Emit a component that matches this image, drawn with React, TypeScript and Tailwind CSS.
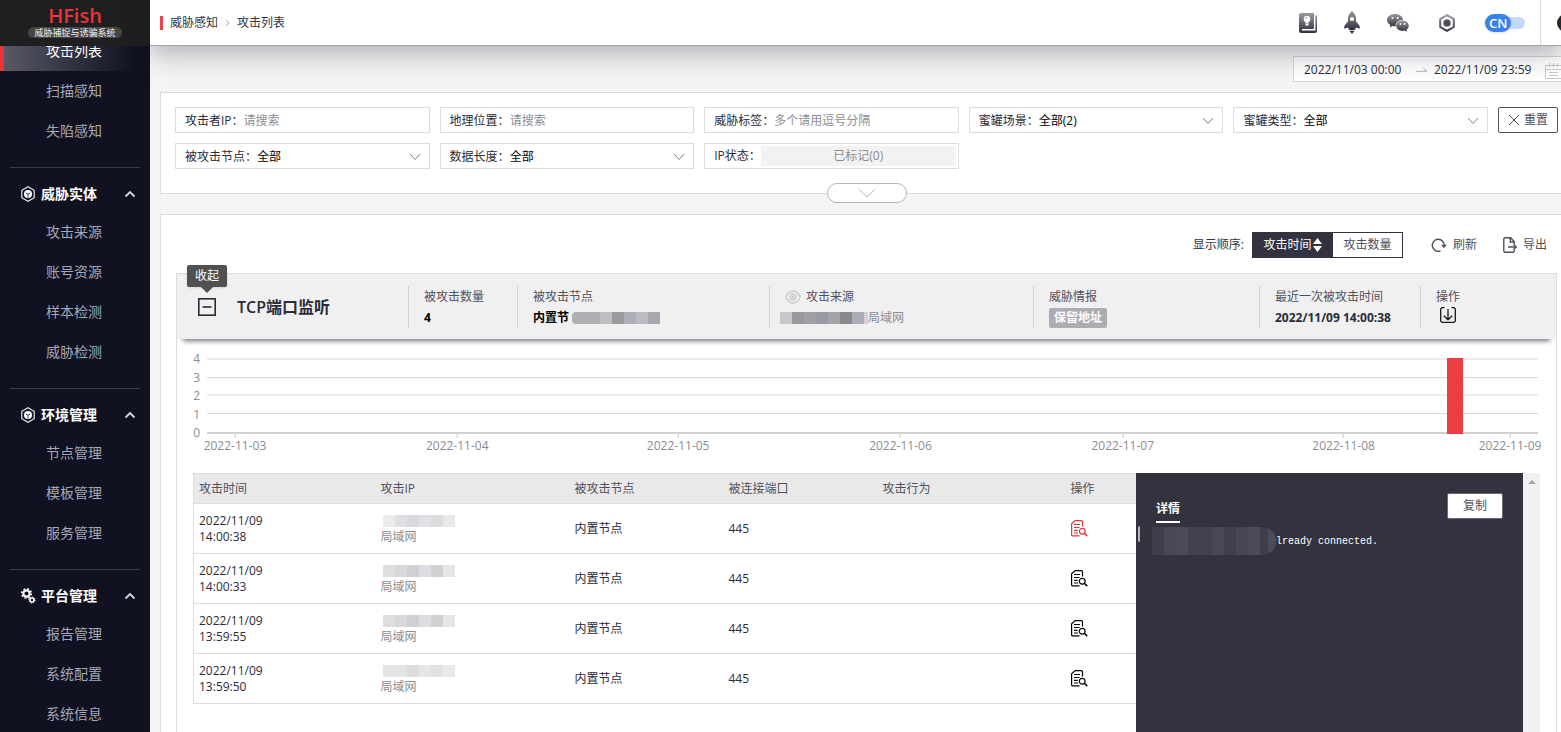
import React from "react";

type MenuGroup = { title: string; icon: "cube" | "gears"; items: string[] };

const menuGroups: MenuGroup[] = [
  { title: "威胁实体", icon: "cube", items: ["攻击来源", "账号资源", "样本检测", "威胁检测"] },
  { title: "环境管理", icon: "cube", items: ["节点管理", "模板管理", "服务管理"] },
  { title: "平台管理", icon: "gears", items: ["报告管理", "系统配置", "系统信息"] },
];

const ipMaskRows = [
  ["bg-[#ececeb]", "bg-[#dedfe3]", "bg-[#d8d9dc]", "bg-[#e0e1e5]", "bg-[#dcdcdc]", "bg-[#e8e9e9]"],
  ["bg-[#dededd]", "bg-[#d8d8da]", "bg-[#cfd0d5]", "bg-[#dcdde2]", "bg-[#d1d1d1]", "bg-[#e5e6e6]"],
  ["bg-[#dededd]", "bg-[#d8d8da]", "bg-[#cfd0d5]", "bg-[#dcdde2]", "bg-[#d1d1d1]", "bg-[#e5e6e6]"],
  ["bg-[#e3e3e3]", "bg-[#e3e3e5]", "bg-[#dcdcde]", "bg-[#e6e6e8]", "bg-[#e1e1e1]", "bg-[#e9e9ea]"],
];

const attacks = [
  { date: "2022/11/09", time: "14:00:38", node: "内置节点", port: "445", active: true },
  { date: "2022/11/09", time: "14:00:33", node: "内置节点", port: "445", active: false },
  { date: "2022/11/09", time: "13:59:55", node: "内置节点", port: "445", active: false },
  { date: "2022/11/09", time: "13:59:50", node: "内置节点", port: "445", active: false },
];

// day labels and where they fall along the axis, in percent
const axisDays = [
  { label: "2022-11-03", at: 2.1 },
  { label: "2022-11-04", at: 18.8 },
  { label: "2022-11-05", at: 35.4 },
  { label: "2022-11-06", at: 52.1 },
  { label: "2022-11-07", at: 68.8 },
  { label: "2022-11-08", at: 85.4 },
  { label: "2022-11-09", at: 97.9 },
];

const bars = [{ at: 93.2, width: 1.15, value: 4 }];
const axisMax = 4;

/* ---------- icons ---------- */

const CubeIcon = () => (
  <svg width="14" height="16" viewBox="0 0 14 16" fill="none" aria-hidden="true">
    <path d="M7 .8 13.2 4.3v7.4L7 15.2.8 11.7V4.3z" stroke="#e8e8ec" strokeWidth="1.2" />
    <circle cx="7" cy="8" r="4" fill="#fff" />
    <path d="M7 8.2V11.500M7 8.2 4.800 7M7 8.2 9.200 7" stroke="#111221" strokeWidth=".8" />
  </svg>
);

const GearsIcon = () => (
  <svg width="15" height="16" viewBox="0 0 15 16" fill="none" aria-hidden="true">
    <circle cx="5.5" cy="5.5" r="3.2" stroke="#fff" strokeWidth="2.2" />
    <circle cx="5.5" cy="5.5" r="4.8" stroke="#fff" strokeWidth="1.5" strokeDasharray="1.9 1.87" />
    <circle cx="11" cy="12" r="2" stroke="#fff" strokeWidth="1.6" />
    <circle cx="11" cy="12" r="3.1" stroke="#fff" strokeWidth="1" strokeDasharray="1.2 1.23" />
  </svg>
);

const ChevronUp = () => (
  <svg width="12" height="8" viewBox="0 0 12 8" fill="none" aria-hidden="true">
    <path d="M1.5 6.5 6 2l4.500 4.500" stroke="#d6d6dc" strokeWidth="1.8" />
  </svg>
);

const ChevronDown = () => (
  <svg width="12" height="8" viewBox="0 0 12 8" fill="none" className="pointer-events-none shrink-0" aria-hidden="true">
    <path d="M1 1l5 5.500L11 1" stroke="#7d7d86" />
  </svg>
);

const IconGradient = ({ id }: { id: string }) => (
  <defs>
    <linearGradient id={id} x1="0" y1="0" x2="0" y2="1">
      <stop offset="0" stopColor="#98989f" />
      <stop offset="1" stopColor="#30303f" />
    </linearGradient>
  </defs>
);

const BookIcon = () => (
  <svg width="18" height="20" viewBox="0 0 18 20" aria-hidden="true">
    <IconGradient id="gBook" />
    <rect width="18" height="20" rx="2" fill="url(#gBook)" />
    <path d="M3 16.700h12.700V2.500" fill="none" stroke="#fff" strokeWidth="1.500" />
    <path d="M15 0h3v2.500h-3z" fill="#fff" />
    <circle cx="8" cy="6" r="3.300" fill="#fff" />
    <path d="M6.500 8.500h3v4h-3z" fill="#fff" />
    <path d="M6.500 10.300h3" stroke="#77777f" strokeWidth=".6" />
    <path d="M6.300 6A1.700 1.700 0 0 1 8 4.300" stroke="#8a8a92" strokeWidth=".7" fill="none" />
  </svg>
);

const RocketIcon = () => (
  <svg width="16" height="23" viewBox="0 0 16 23" aria-hidden="true">
    <IconGradient id="gRocket" />
    <path
      fill="url(#gRocket)"
      fillRule="evenodd"
      d="M8 0c2.600 2 4 5 4 8v2.500l3 3.500c.8 1 .8 2 .8 3.800L12 16.500c-.3 1.200-.8 2-1.500 2.500h-5c-.7-.5-1.200-1.300-1.500-2.500L.2 17.800C.2 16 .2 15 1 14l3-3.500V8c0-3 1.400-6 4-8zm0 6a2.100 2.100 0 1 0 0 4.200A2.100 2.100 0 0 0 8 6z"
    />
    <path d="M5.500 19.800h5L8 23z" fill="#30303f" />
  </svg>
);

const WechatIcon = () => (
  <svg width="22" height="18" viewBox="0 0 22 18" aria-hidden="true">
    <IconGradient id="gChat" />
    <path
      fill="url(#gChat)"
      d="M8 0c4.400 0 8 2.600 8 6-4-.3-7.700 2.300-7.300 6.300-1.100.1-2.200 0-3.200-.3L2.700 13.600l.7-2.600C1.300 9.900 0 8.100 0 6c0-3.300 3.600-6 8-6z"
    />
    <path
      fill="url(#gChat)"
      d="M15.500 6.500c3.500 0 6.300 2.300 6.300 5.200 0 1.600-.9 3-2.300 4l.5 2.100-2.400-1.200c-.7.200-1.400.3-2.100.3-3.500 0-6.300-2.300-6.300-5.200s2.800-5.200 6.300-5.200z"
    />
    <g fill="#fff">
      <circle cx="5.500" cy="4" r="1" />
      <circle cx="10.600" cy="4" r="1" />
      <circle cx="13.400" cy="10" r=".9" />
      <circle cx="17.600" cy="10" r=".9" />
    </g>
  </svg>
);

const HexIcon = () => (
  <svg width="16" height="18" viewBox="0 0 16 18" fill="none" aria-hidden="true">
    <IconGradient id="gHex" />
    <path d="M8 1.200 14.800 5v8L8 16.800 1.200 13V5z" stroke="url(#gHex)" strokeWidth="2" strokeLinejoin="round" />
    <circle cx="8" cy="9" r="3.600" fill="#4d4d59" stroke="#7c7c85" strokeWidth=".6" />
  </svg>
);

const CalendarIcon = () => (
  <svg width="17" height="17" viewBox="0 0 17 17" fill="none" stroke="#c8c8cc" aria-hidden="true">
    <path d="M.5 3.500h16v13H.5zM.5 7.500h16M4.500 1v4M12.500 1v4M8.500 1v4M4 10.500h9M4 13.500h9" />
  </svg>
);

const MinusBox = () => (
  <svg width="18" height="18" viewBox="0 0 18 18" fill="none" stroke="#2b2b3a" aria-hidden="true">
    <rect x=".8" y=".8" width="16.400" height="16.400" strokeWidth="1.600" />
    <path d="M4.500 9h9" strokeWidth="1.600" />
  </svg>
);

const EyeIcon = () => (
  <svg width="16" height="14" viewBox="0 0 16 14" fill="none" stroke="#cbcbcd" strokeWidth="1.400" aria-hidden="true">
    <path d="M.8 7C2.500 3 5 1 8 1s5.500 2 7.200 6C13.500 11 11 13 8 13S2.500 11 .8 7z" />
    <circle cx="8" cy="7" r="3" />
    <circle cx="8" cy="7" r="1" fill="#cbcbcd" />
  </svg>
);

const DownloadBox = () => (
  <svg width="16" height="16" viewBox="0 0 16 16" fill="none" stroke="#16161c" strokeWidth="1.300" aria-hidden="true">
    <path d="M4.500 .7H2.500A1.800 1.800 0 0 0 .7 2.500v11a1.800 1.800 0 0 0 1.800 1.800h11a1.800 1.800 0 0 0 1.800-1.800v-11A1.800 1.800 0 0 0 13.500.7h-2" />
    <path d="M8 2v10.500M3.800 8.700 8 12.800l4.200-4.100" />
  </svg>
);

const RefreshIcon = () => (
  <svg width="16" height="15" viewBox="0 0 16 15" fill="none" aria-hidden="true">
    <path d="M9.500 12.800A6 6 0 1 1 13.200 8" stroke="#50505c" strokeWidth="1.400" />
    <path d="M10.200 6.800h5.600L13 10.200z" fill="#50505c" />
  </svg>
);

const ExportIcon = () => (
  <svg width="14" height="16" viewBox="0 0 14 16" fill="none" stroke="#50505c" strokeWidth="1.400" aria-hidden="true">
    <path d="M11.300 7V4.700L7.700.8H2A1.200 1.200 0 0 0 .8 2v12A1.200 1.200 0 0 0 2 15.200h8.100a1.200 1.200 0 0 0 1.200-1.200v-1" />
    <path d="M7.300.8v4.200h4M5 10h8M10.500 7.300 13.200 10l-2.700 2.700" />
  </svg>
);

const DocSearchIcon = () => (
  <svg width="17" height="17" viewBox="0 0 17 17" fill="none" stroke="currentColor" strokeWidth="1.200" aria-hidden="true">
    <path d="M11.500 6.500V1.800A1.200 1.200 0 0 0 10.300.6H4.200L.6 3.800v10.900a1.200 1.200 0 0 0 1.200 1.200H8.500" />
    <path d="M3 4.500h6M3 7.500h5.500M3 10.300h3.600M3 13h4" />
    <circle cx="11.200" cy="11.200" r="2.900" />
    <path d="m13.300 13.300 2.900 2.800" strokeWidth="1.500" />
  </svg>
);

/* ---------- sidebar ---------- */

const MenuItem = ({ label, active = false }: { label: string; active?: boolean }) => (
  <li>
    <a
      href="#"
      className={
        active
          ? "flex h-10 items-center border-l-4 border-[#eb3437] bg-linear-to-r from-[#5a5a66] to-[#111221] to-90% pl-[42px] text-white"
          : "flex h-10 items-center pl-[46px] text-[#a7a8b3]"
      }
    >
      {label}
    </a>
  </li>
);

const Sidebar = () => (
  <aside className="flex w-[150px] shrink-0 flex-col bg-[#111221] text-sm">
    <div className="z-10 flex h-[46px] shrink-0 flex-col items-center bg-[#1f1f1f] pt-[5px]">
      <span className="text-xl leading-[22px] font-semibold text-[#eb3437]">HFish</span>
      <span className="rounded-full bg-[#454545] px-[6px] text-[9px] leading-[11px] text-[#f0f0f0]">威胁捕捉与诱骗系统</span>
    </div>
    <nav className="min-h-0 flex-1 overflow-hidden">
      {/* the menu is scrolled a little, so its first entry is cut by the logo */}
      <ul className="-mt-[15px]">
        <MenuItem label="攻击列表" active />
        <MenuItem label="扫描感知" />
        <MenuItem label="失陷感知" />
      </ul>
      {menuGroups.map((group) => (
        <section key={group.title}>
          <hr className="mx-[10px] mt-4 border-[#3a3b48]" />
          <button type="button" className="mt-2 flex h-9 w-full items-center pr-[14px] pl-[21px] font-bold text-white">
            <span className="w-5">{group.icon === "cube" ? <CubeIcon /> : <GearsIcon />}</span>
            <span className="flex-1 text-left">{group.title}</span>
            <ChevronUp />
          </button>
          <ul>
            {group.items.map((item) => (
              <MenuItem key={item} label={item} />
            ))}
          </ul>
        </section>
      ))}
    </nav>
  </aside>
);

/* ---------- top bar ---------- */

const TopBar = () => (
  <header className="relative z-10 flex h-[46px] shrink-0 items-center border-b border-[#a3a3ab] bg-white pl-[10px] shadow-[0_6px_28px_rgba(20,20,45,0.34)]">
    <span className="mr-[7px] h-[14px] w-[3px] bg-[#eb4446]" />
    <nav className="flex items-center gap-[7px] text-[#333340]">
      <a href="#">威胁感知</a>
      <svg width="5" height="8" viewBox="0 0 5 8" fill="none" aria-hidden="true">
        <path d="M.8.8 4 4 .8 7.200" stroke="#a8a8ae" />
      </svg>
      <a href="#">攻击列表</a>
    </nav>
    <div className="ml-auto flex h-full items-center">
      <div className="flex items-center gap-[27px] pr-[30px]">
        <button type="button" aria-label="文档"><BookIcon /></button>
        <button type="button" aria-label="更新"><RocketIcon /></button>
        <button type="button" aria-label="微信"><WechatIcon /></button>
        <button type="button" aria-label="社区" className="ml-[3px]"><HexIcon /></button>
      </div>
      <button type="button" role="switch" aria-checked="true" className="mr-[15px] flex w-10 items-center">
        <span className="z-10 rounded-full bg-[#3a80ea] px-1 text-[13px] leading-[18px] font-semibold text-white shadow">CN</span>
        <span className="-ml-2 h-3 flex-1 rounded-r-full bg-[#c3d8fa]" />
      </button>
      <div className="flex h-full w-[21px] items-center overflow-hidden border-l border-[#dcdcdf] pl-4">
        <span className="size-[18px] shrink-0 rounded-full bg-[#26262e]" />
      </div>
    </div>
  </header>
);

/* ---------- filters ---------- */

const fieldBox = "flex h-[26px] items-center border border-[#dcdce0] pl-[9px] text-[#2b2b3a]";

const TextFilter = ({ id, label, placeholder }: { id: string; label: string; placeholder: string }) => (
  <div className={`${fieldBox} pt-[2px]`}>
    <label htmlFor={id} className="shrink-0">{label}：</label>
    <input id={id} placeholder={placeholder} className="min-w-0 flex-1 outline-none placeholder:text-[#8c8c94]" />
  </div>
);

const SelectFilter = ({ id, label, value }: { id: string; label: string; value: string }) => (
  <div className={`${fieldBox} pt-[2px] pr-2`}>
    <label htmlFor={id} className="shrink-0">{label}：</label>
    <select id={id} className="min-w-0 flex-1 appearance-none text-black outline-none">
      <option>{value}</option>
    </select>
    <ChevronDown />
  </div>
);

const Filters = () => (
  <section className="relative mt-[10px] flex items-start gap-[10px] border border-[#dcdce0] bg-white px-[14px] pt-[14px] pb-6">
    <div className="grid flex-1 grid-cols-5 gap-[10px]">
      <TextFilter id="ip" label="攻击者IP" placeholder="请搜索" />
      <TextFilter id="geo" label="地理位置" placeholder="请搜索" />
      <TextFilter id="tag" label="威胁标签" placeholder="多个请用逗号分隔" />
      <SelectFilter id="scene" label="蜜罐场景" value="全部(2)" />
      <SelectFilter id="type" label="蜜罐类型" value="全部" />
      <SelectFilter id="node" label="被攻击节点" value="全部" />
      <SelectFilter id="length" label="数据长度" value="全部" />
      <div className={`${fieldBox} pr-[2px]`}>
        <span className="shrink-0">IP状态：</span>
        <button type="button" className="h-5 flex-1 rounded-[2px] bg-[#f2f2f2] text-[#8c8c94]">已标记(0)</button>
      </div>
    </div>
    <button type="button" className="flex h-[26px] w-[60px] items-center justify-center gap-1 rounded-[2px] border border-[#50505e] text-[#50505e]">
      <svg width="12" height="12" viewBox="0 0 12 12" stroke="#50505e" aria-hidden="true">
        <path d="m1 1 10 10M11 1 1 11" />
      </svg>
      重置
    </button>
    <button
      type="button"
      aria-label="展开"
      className="absolute -bottom-[10px] left-1/2 flex h-5 w-20 -translate-x-1/2 items-center justify-center rounded-full border border-[#b4b4b9] bg-white"
    >
      <svg width="18" height="9" viewBox="0 0 18 9" fill="none" stroke="#b4b4b9" aria-hidden="true">
        <path d="m1 .5 8 7.500 8-7.500" />
      </svg>
    </button>
  </section>
);

/* ---------- attack list ---------- */

const ListToolbar = () => (
  <div className="flex items-center justify-end pr-[10px] text-[#50505c]">
    <span className="mr-2 text-[#333340]">显示顺序:</span>
    <div className="flex h-[26px] border border-[#333340]">
      <button type="button" className="flex w-20 items-center justify-center gap-[2px] bg-[#333340] text-white">
        攻击时间
        <svg width="9" height="14" viewBox="0 0 9 14" fill="#fff" aria-hidden="true">
          <path d="M4.500 0 9 6H0zM4.500 14 0 8h9z" />
        </svg>
      </button>
      <button type="button" className="w-[69px]">攻击数量</button>
    </div>
    <button type="button" className="ml-7 flex items-center gap-[6px]"><RefreshIcon />刷新</button>
    <button type="button" className="ml-[26px] flex items-center gap-[6px]"><ExportIcon />导出</button>
  </div>
);

const SummaryCell = ({ label, children }: { label: React.ReactNode; children: React.ReactNode }) => (
  <div className="flex h-[42px] min-w-0 flex-col justify-between border-l border-[#d2d2d5] pl-[15px]">
    <div className="flex items-center gap-[5px] leading-[22px] whitespace-nowrap text-[#50505c]">{label}</div>
    <div className="flex h-5 items-center whitespace-nowrap">{children}</div>
  </div>
);

const Summary = () => (
  <div className="relative">
    <div className="absolute inset-x-[6px] bottom-0 h-3 shadow-[0_2px_5px_rgba(20,20,40,0.6)]" />
    <div className="relative grid h-[65px] grid-cols-[231fr_109fr_252fr_264fr_226fr_161fr_136fr] items-center bg-[#f0f0f0]">
      <div className="relative flex items-center pl-[21px]">
        <button type="button" aria-label="收起"><MinusBox /></button>
        <span className="ml-[21px] text-base font-semibold text-[#2b2b3a]">TCP端口监听</span>
        <div role="tooltip" className="absolute bottom-[26px] left-[10px] flex flex-col items-center">
          <span className="rounded-[2px] bg-[#505050] px-2 leading-[22px] text-white shadow">收起</span>
          <svg width="12" height="6" viewBox="0 0 12 6" fill="#505050" aria-hidden="true">
            <path d="M0 0h12L6 6z" />
          </svg>
        </div>
      </div>
      <SummaryCell label="被攻击数量"><b className="text-black">4</b></SummaryCell>
      <SummaryCell label="被攻击节点">
        <b className="text-black">内置节</b>
        <span className="ml-[3px] flex h-3 overflow-hidden rounded-l">
          <i className="w-7 bg-[#b0b0b4]" />
          <i className="w-3 bg-[#bdbec2]" />
          <i className="w-3 bg-[#9c999c]" />
          <i className="w-3 bg-[#acb0bb]" />
          <i className="w-3 bg-[#bbbbc1]" />
          <i className="w-3 bg-[#a8a7af]" />
        </span>
      </SummaryCell>
      <SummaryCell label={<><EyeIcon />攻击来源</>}>
        <span className="-ml-[5px] flex h-3">
          <i className="w-3 bg-[#c8c8cc]" />
          <i className="w-3 bg-[#9a989b]" />
          <i className="w-3 bg-[#a09fa5]" />
          <i className="w-3 bg-[#989ba3]" />
          <i className="w-3 bg-[#a3a5a9]" />
          <i className="w-3 bg-[#8c898c]" />
          <i className="w-3 bg-[#abaeb6]" />
          <i className="w-1 bg-[#d3d3d5]" />
        </span>
        <span className="text-[#8c8c94]">局域网</span>
      </SummaryCell>
      <SummaryCell label="威胁情报">
        <span className="rounded-[2px] bg-[#acacb3] px-[5px] leading-5 font-semibold text-white">保留地址</span>
      </SummaryCell>
      <SummaryCell label="最近一次被攻击时间"><b className="text-[#2b2b3a]">2022/11/09 14:00:38</b></SummaryCell>
      <SummaryCell label="操作">
        <button type="button" aria-label="下载" className="ml-1 pb-[6px]"><DownloadBox /></button>
      </SummaryCell>
    </div>
  </div>
);

const TrendChart = () => (
  <div className="mt-[11px] flex items-start gap-[7px] pr-[18px] pl-4 text-[#8c8c90]">
    <div className="flex h-[91px] w-[7px] flex-col justify-between text-right leading-[17px]">
      {[4, 3, 2, 1, 0].map((n) => (
        <span key={n}>{n}</span>
      ))}
    </div>
    <div className="mt-2 flex-1">
      <div className="relative h-[76px]">
        <div className="grid h-full grid-rows-4 border-t-2 border-b-2 border-t-[#ebebeb] border-b-[#d0d0d2]">
          <span className="border-b border-[#d8d8da]" />
          <span className="border-b-2 border-[#ebebeb]" />
          <span className="border-b border-[#d8d8da]" />
          <span />
        </div>
        {bars.map((bar) => (
          <div
            key={bar.at}
            className="absolute bottom-0 bg-[#ec3e40]"
            style={{ left: `${bar.at}%`, width: `${bar.width}%`, height: `${(bar.value / axisMax) * 100}%` }}
          />
        ))}
      </div>
      <div className="relative h-[21px]">
        {axisDays.map((day) => (
          <div key={day.label} className="absolute top-0 flex -translate-x-1/2 flex-col items-center leading-4" style={{ left: `${day.at}%` }}>
            <i className="h-1 w-px bg-[#c8c8ca]" />
            <span className="whitespace-nowrap">{day.label}</span>
          </div>
        ))}
      </div>
    </div>
  </div>
);

const AttackTable = () => (
  <div className="min-w-0 flex-1">
    <table className="w-full table-fixed border-collapse border border-[#dcdce0] text-left leading-4">
      <thead className="bg-[#e9e9e9] text-[#50505c]">
        <tr className="h-[30px]">
          <th className="w-[182px] pl-[5px] font-normal">攻击时间</th>
          <th className="w-[194px] pl-[5px] font-normal">攻击IP</th>
          <th className="w-[154px] pl-[5px] font-normal">被攻击节点</th>
          <th className="w-[154px] pl-[5px] font-normal">被连接端口</th>
          <th className="w-[188px] pl-[5px] font-normal">攻击行为</th>
          <th className="w-[71px] pl-[5px] font-normal">操作</th>
        </tr>
      </thead>
      <tbody className="text-[#2b2b3a]">
        {attacks.map((attack, i) => (
          <tr key={attack.time} className="h-[50px] border-t border-[#dcdce0]">
            <td className="pl-[5px]">{attack.date}<br />{attack.time}</td>
            <td className="pl-[5px] text-[#8c8c94]">
              <span className="ml-[2px] flex h-4 py-[2px]">
                {ipMaskRows[i].map((tone, n) => (
                  <i key={n} className={`w-3 ${tone}`} />
                ))}
              </span>
              局域网
            </td>
            <td className="pl-[5px]">{attack.node}</td>
            <td className="pl-[5px]">{attack.port}</td>
            <td className="pl-[5px]" />
            <td className="pl-[5px]">
              <button type="button" aria-label="查看详情" className={attack.active ? "block text-[#eb3437]" : "block text-black"}>
                <DocSearchIcon />
              </button>
            </td>
          </tr>
        ))}
      </tbody>
    </table>
  </div>
);

const DetailPanel = () => (
  <div className="flex min-h-[300px] w-[404px] shrink-0">
    <div className="relative flex-1 overflow-hidden bg-[#333340] pt-5 pr-5 pl-4">
      <span className="absolute top-[53px] left-[2px] h-4 w-[2px] rounded-l-full bg-[#b5b5bc]" />
      <div className="flex items-start justify-between pl-1">
        <h3 className="mt-[6px] border-b-2 border-white pb-[2px] leading-5 font-semibold text-white">详情</h3>
        <button type="button" className="h-[26px] w-14 rounded-[2px] border border-[#6a6a76] bg-white text-[#50505c]">复制</button>
      </div>
      <div className="mt-1 flex items-center">
        <span className="flex h-7 overflow-hidden rounded-r-full">
          <i className="w-3 bg-[#3f3f4b]" />
          <i className="w-3 bg-[#484854]" />
          <i className="w-3 bg-[#4b4a56]" />
          <i className="w-6 bg-[#42424e]" />
          <i className="w-3 bg-[#484753]" />
          <i className="w-3 bg-[#40404c]" />
          <i className="w-3 bg-[#474753]" />
          <i className="w-3 bg-[#4c4b57]" />
          <i className="w-2 bg-[#3f3f4b]" />
          <i className="w-2 bg-[#4d4c58]" />
        </span>
        <code className="pt-[2px] font-['Liberation_Mono',monospace] text-[10px] text-white">lready connected.</code>
      </div>
    </div>
    <div className="flex w-[17px] justify-center bg-[#f1f1f1] pt-[7px]">
      <svg width="8" height="4" viewBox="0 0 8 4" fill="#a3a3a3" aria-hidden="true">
        <path d="M4 0l4 4H0z" />
      </svg>
    </div>
  </div>
);

const AttackList = () => (
  <section className="mt-5 flex-1 border border-[#dcdce0] bg-white px-[15px] pt-[17px]">
    <ListToolbar />
    <article className="mt-[15px] h-full border border-[#dcdce0]">
      <Summary />
      <TrendChart />
      <div className="mt-[18px] flex px-4">
        <AttackTable />
        <DetailPanel />
      </div>
    </article>
  </section>
);

const App: React.FC = () => (
  <div className="flex h-screen overflow-hidden bg-[#f4f4f4] font-['Open_Sans','Noto_Sans_CJK_SC',sans-serif] text-xs" lang="zh-CN">
    <Sidebar />
    <div className="flex min-w-0 flex-1 flex-col">
      <TopBar />
      <main className="min-h-0 flex-1 overflow-hidden">
        {/* the content is slightly wider than the window and runs off its right edge */}
        <div className="flex h-full w-[calc(100%+22px)] flex-col px-[10px] pt-[10px]">
          <div className="flex h-[26px] w-[280px] shrink-0 items-center self-end border border-[#d4d4d8] bg-white px-[10px] pt-[2px] text-[#2b2b3a]">
            <input aria-label="开始时间" defaultValue="2022/11/03 00:00" className="w-[105px] outline-none" />
            <svg width="12" height="6" viewBox="0 0 12 6" fill="none" stroke="#b0b0b4" className="mx-[7px]" aria-hidden="true">
              <path d="M0 4.500h12L8 1" />
            </svg>
            <input aria-label="结束时间" defaultValue="2022/11/09 23:59" className="w-[105px] outline-none" />
            <span className="ml-[6px] shrink-0"><CalendarIcon /></span>
          </div>
          <Filters />
          <AttackList />
        </div>
      </main>
    </div>
  </div>
);

export default App;
